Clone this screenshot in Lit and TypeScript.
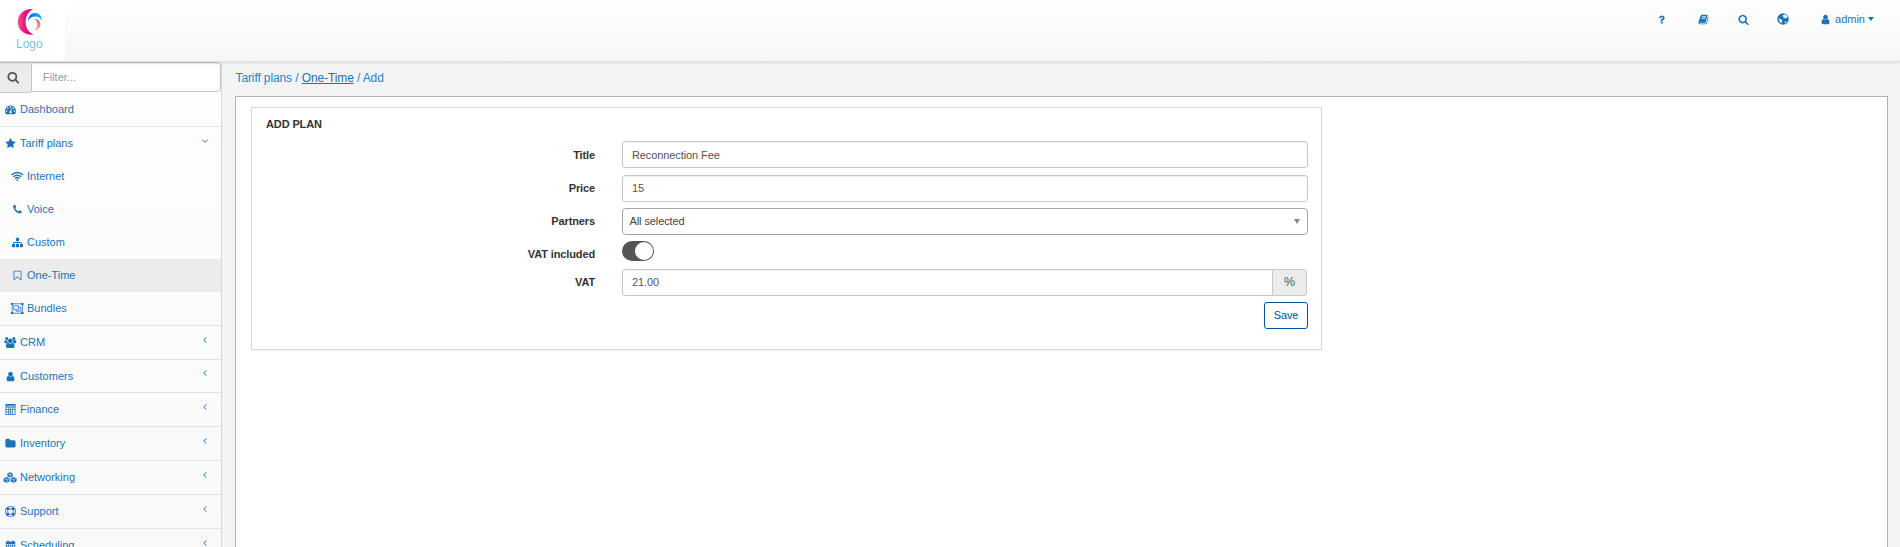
import { LitElement, html, css, svg, type TemplateResult } from "lit";
import { customElement, property } from "lit/decorators.js";
import { classMap } from "lit/directives/class-map.js";

interface Glyph { w: number; body: TemplateResult }
const p = (d: string, w = 1792): Glyph => ({ w, body: svg`<path d=${d}/>` });

const glyphs: Record<string, Glyph> = {
  search: p("M1216 832q0-185-131.5-316.5t-316.5-131.5-316.5 131.5-131.5 316.5 131.5 316.5 316.5 131.5 316.5-131.5 131.5-316.5zm512 832q0 52-38 90t-90 38q-54 0-90-38l-343-342q-179 124-399 124-143 0-273.5-55.5t-225-150-150-225-55.5-273.5 55.5-273.5 150-225 225-150 273.5-55.5 273.5 55.5 225 150 150 225 55.5 273.5q0 220-124 399l343 343q37 37 37 90z"),
  dashboard: p("M384 1152q0-53-37.5-90.5t-90.5-37.5-90.5 37.5-37.5 90.5 37.5 90.5 90.5 37.5 90.5-37.5 37.5-90.5zm192-448q0-53-37.5-90.5t-90.5-37.5-90.5 37.5-37.5 90.5 37.5 90.5 90.5 37.5 90.5-37.5 37.5-90.5zm428 481l101-382q6-26-7.5-48.5t-38.5-29.5-48 6.5-30 39.5l-101 382q-60 5-107 43.5t-63 98.5q-20 77 20 146t117 89 146-20 89-117q16-60-6-117t-72-91zm660-33q0-53-37.5-90.5t-90.5-37.5-90.5 37.5-37.5 90.5 37.5 90.5 90.5 37.5 90.5-37.5 37.5-90.5zm-640-640q0-53-37.5-90.5t-90.5-37.5-90.5 37.5-37.5 90.5 37.5 90.5 90.5 37.5 90.5-37.5 37.5-90.5zm448 192q0-53-37.5-90.5t-90.5-37.5-90.5 37.5-37.5 90.5 37.5 90.5 90.5 37.5 90.5-37.5 37.5-90.5zm320 448q0 261-141 483-19 29-54 29h-1402q-35 0-54-29-141-221-141-483 0-182 71-348t191-286 286-191 348-71 348 71 286 191 191 286 71 348z"),
  star: p("M1728 647q0 22-26 48l-363 354 86 500q1 7 1 20 0 21-10.5 35.5t-30.5 14.5q-19 0-40-12l-449-236-449 236q-22 12-40 12-21 0-31.5-14.5t-10.5-35.5q0-6 2-20l86-500-364-354q-25-27-25-48 0-37 56-46l502-73 225-455q19-41 49-41t49 41l225 455 502 73q56 9 56 46z"),
  phone: p("M1600 1240q0 27-10 70.5t-21 68.5q-21 50-122 106-94 51-186 51-27 0-53-3.5t-57.5-12.5-47-14.5-55.5-20.5-49-18q-98-35-175-83-127-79-264-216t-216-264q-48-77-83-175-3-9-18-49t-20.5-55.5-14.5-47-12.5-57.5-3.5-53q0-92 51-186 56-101 106-122 25-11 68.5-21t70.5-10q14 0 21 3 18 6 53 76 11 19 30 54t35 63.5 31 53.5q3 4 17.5 25t21.5 35.5 7 28.5q0 20-28.5 50t-62 55-62 53-28.5 46q0 9 5 22.5t8.5 20.5 14 24 11.5 19q76 137 174 235t235 174q2 1 19 11.5t24 14 20.5 8.5 22.5 5q18 0 46-28.5t53-62 55-62 50-28.5q14 0 28.5 7t35.5 21.5 25 17.5q25 15 53.5 31t63.5 35 54 30q70 35 76 53 3 7 3 21z"),
  sitemap: p("M1792 1248v320q0 40-28 68t-68 28h-320q-40 0-68-28t-28-68v-320q0-40 28-68t68-28h96v-192h-512v192h96q40 0 68 28t28 68v320q0 40-28 68t-68 28h-320q-40 0-68-28t-28-68v-320q0-40 28-68t68-28h96v-192h-512v192h96q40 0 68 28t28 68v320q0 40-28 68t-68 28h-320q-40 0-68-28t-28-68v-320q0-40 28-68t68-28h96v-192q0-52 38-90t90-38h512v-192h-96q-40 0-68-28t-28-68v-320q0-40 28-68t68-28h320q40 0 68 28t28 68v320q0 40-28 68t-68 28h-96v192h512q52 0 90 38t38 90v192h96q40 0 68 28t28 68z"),
  bookmark: p("M1408 256h-1024v1242l423-406 89-85 89 85 423 406v-1242zm12-128q23 0 44 9 33 13 52.5 41t19.5 62v1289q0 34-19.5 62t-52.5 41q-19 8-44 8-48 0-83-32l-441-424-441 424q-36 33-83 33-23 0-44-9-33-13-52.5-41t-19.5-62v-1289q0-34 19.5-62t52.5-41q21-9 44-9h1048z"),
  user: p("M1536 1399q0 109-62.5 187t-150.5 78h-854q-88 0-150.5-78t-62.5-187q0-85 8.5-160.5t31.5-152 58.5-131 94-89 134.5-34.5q131 128 313 128t313-128q76 0 134.5 34.5t94 89 58.5 131 31.5 152 8.5 160.5zm-256-887q0 159-112.5 271.5t-271.5 112.5-271.5-112.5-112.5-271.5 112.5-271.5 271.5-112.5 271.5 112.5 112.5 271.5z"),
  folder: p("M1728 608v704q0 92-66 158t-158 66h-1216q-92 0-158-66t-66-158v-960q0-92 66-158t158-66h320q92 0 158 66t66 158v32h672q92 0 158 66t66 158z"),
  group: p("M657 896q-162 5-265 128h-134q-82 0-138-40.5t-56-118.5q0-353 124-353 6 0 43.5 21t97.5 42.5 119 21.5q67 0 133-23-5 37-5 66 0 159 93 287zm1071 637q0 120-73 189.5t-194 69.5h-874q-121 0-194-69.5t-73-189.5q0-53 3.5-103.5t14-109 26.5-108.5 43-97.5 62-81 85.5-53.5 111.5-20q10 0 43 21.5t73 48 107 48 135 21.5 135-21.5 107-48 73-48 43-21.5q61 0 111.5 20t85.5 53.5 62 81 43 97.5 26.5 108.5 14 109 3.5 103.5zm-1024-1277q0 106-75 181t-181 75-181-75-75-181 75-181 181-75 181 75 75 181zm704 384q0 159-112.5 271.5t-271.5 112.5-271.5-112.5-112.5-271.5 112.5-271.5 271.5-112.5 271.5 112.5 112.5 271.5zm576 225q0 78-56 118.5t-138 40.5h-134q-103-123-265-128 93-128 93-287 0-29-5-66 66 23 133 23 59 0 119-21.5t97.5-42.5 43.5-21q124 0 124 353zm-128-609q0 106-75 181t-181 75-181-75-75-181 75-181 181-75 181 75 75 181z", 2048),
  book: p("M1703 478q40 57 18 129l-275 906q-19 64-76.5 107.5t-122.5 43.5h-923q-77 0-148.5-53.5t-99.5-131.5q-24-67-2-127 0-4 3-27t4-37q1-8-3-21.5t-3-19.5q2-11 8-21t16.5-23.5 16.5-23.5q23-38 45-91.5t30-91.5q3-10 .5-30t-.5-28q3-11 17-28t17-23q21-36 42-92t25-90q1-9-2.5-32t.5-28q4-13 22-30.5t22-22.5q19-26 42.5-84.5t27.5-96.5q1-8-3-25.5t-2-26.5q2-8 9-18t18-23 17-21q8-12 16.5-30.5t15-35 16-36 19.5-32 26.5-23.5 36-11.5 47.5 5.5l-1 3q38-9 51-9h761q74 0 114 56t18 130l-274 906q-36 119-71.5 153.5t-128.5 34.5h-869q-27 0-38 15-11 16-1 43 24 70 144 70h923q29 0 56-15.5t35-41.5l300-987q7-22 5-57 38 15 59 43zm-1064 2q-4 13 2 22.5t20 9.5h608q13 0 25.5-9.5t16.5-22.5l21-64q4-13-2-22.5t-20-9.5h-608q-13 0-25.5 9.5t-16.5 22.5zm-83 256q-4 13 2 22.5t20 9.5h608q13 0 25.5-9.5t16.5-22.5l21-64q4-13-2-22.5t-20-9.5h-608q-13 0-25.5 9.5t-16.5 22.5z"),
  question: p("M1088 1256v240q0 16-12 28t-28 12h-240q-16 0-28-12t-12-28v-240q0-16 12-28t28-12h240q16 0 28 12t12 28zm316-600q0 54-15.5 101t-35 76.5-55 59.5-57.5 43.5-61 35.5q-41 23-68.5 65t-27.5 67q0 17-12 32.5t-28 15.5h-240q-15 0-25.5-18.5t-10.5-37.5v-45q0-83 65-156.5t143-108.5q59-27 84-56t25-76q0-42-46.5-74t-107.5-32q-65 0-108 29-35 25-107 115-13 16-31 16-12 0-25-8l-164-125q-13-10-15.5-25t5.5-28q160-266 464-266 80 0 161 31t146 83 106 127.5 41 158.5z"),
  support: p("M896 0q182 0 348 71t286 191 191 286 71 348-71 348-191 286-286 191-348 71-348-71-286-191-191-286-71-348 71-348 191-286 286-191 348-71zm0 128q-190 0-361 90l194 194q82-28 167-28t167 28l194-194q-171-90-361-90zm-678 1129l194-194q-28-82-28-167t28-167l-194-194q-90 171-90 361t90 361zm678 407q190 0 361-90l-194-194q-82 28-167 28t-167-28l-194 194q171 90 361 90zm0-384q159 0 271.5-112.5t112.5-271.5-112.5-271.5-271.5-112.5-271.5 112.5-112.5 271.5 112.5 271.5 271.5 112.5zm484-217l194 194q90-171 90-361t-90-361l-194 194q28 82 28 167t-28 167z"),
  wifi: { w: 2048, body: svg`<g fill="none" stroke="currentColor" stroke-width="230"><path d="M90 660Q480 250 1024 250T1958 660"/><path d="M380 960Q650 670 1024 670T1668 960"/><path d="M670 1240Q820 1070 1024 1070T1378 1240"/></g><path d="M1024 1660l-200-220q80-90 200-90t200 90z"/>` },
  bundles: { w: 2048, body: svg`<g fill="none" stroke="currentColor" stroke-width="128"><path d="M190 128H1858V1664H190Z"/><path d="M448 448H1216V1088H448Z"/><path d="M1280 704H1600V1344H832V1152"/></g><path d="M0 0h384v320H0zM1664 0h384v320h-384zM0 1472h384v320H0zM1664 1472h384v320h-384z"/>` },
  finance: p("M80 0H1712V1792H80ZM220 570V840H490V570ZM600 570V840H850V570ZM960 570V840H1210V570ZM1320 570V840H1580V570ZM220 960V1230H490V960ZM600 960V1230H850V960ZM960 960V1230H1210V960ZM1320 960V1650H1580V960ZM220 1350V1650H490V1350ZM600 1350V1650H850V1350ZM960 1350V1650H1210V1350ZM220 270V390H1580V270Z"),
  cubes: { w: 2304, body: svg`<path d="M1152 30L1590 210V700L1152 900L714 700V210ZM600 800L1060 990V1530L600 1760L90 1530V1010ZM1704 800L2214 1010V1530L1704 1760L1244 1530V990Z"/><g class="cut" fill="none" stroke-width="95"><path d="M790 290L1152 440L1514 290M1200 450V800M200 1060L600 1240L990 1060M650 1250V1640M1310 1060L1704 1240L2110 1060M1754 1250V1640"/></g>` },
  calendar: p("M128 1728V256H400V64H600V256H1192V64H1392V256H1664V1728ZM256 640V880H500V640ZM620 640V880H850V640ZM950 640V880H1180V640ZM1300 640V880H1536V640ZM256 1000V1240H500V1000ZM620 1000V1240H850V1000ZM950 1000V1240H1180V1000ZM1300 1000V1240H1536V1000ZM256 1360V1600H500V1360ZM620 1360V1600H850V1360ZM950 1360V1600H1180V1360ZM1300 1360V1600H1536V1360Z"),
  globe: { w: 1792, body: svg`<circle cx="896" cy="896" r="860"/><path class="hole" d="M880 330L1080 230L1330 260L1530 480L1600 700L1480 700L1330 700L1200 830L1130 760L1020 800L960 700L1060 620L960 560L860 520ZM200 800L420 900L640 960L800 1120L700 1290L640 1520L440 1400L360 1140ZM1180 1300L1450 1200L1330 1430L1130 1560Z"/>` },
};

@customElement("ui-icon")
class UiIcon extends LitElement {
  static styles = css`
    :host { display: inline-flex; flex: none; justify-content: center; width: 14px; height: var(--icon-size, 11px); }
    svg { height: 100%; width: auto; display: block; fill: currentColor; overflow: visible; flex: none; }
    .cut { stroke: #fafafa; }
    .hole { fill: #fdfdfd; }
  `;
  @property() name = "";
  render() {
    const g = glyphs[this.name];
    return html`<svg viewBox="0 0 ${g.w} 1792" fill-rule="evenodd">${g.body}</svg>`;
  }
}

interface Item { icon: string; label: string; kind?: "sub" | "open" | "leaf"; active?: boolean; last?: boolean; tight?: boolean }
const items: Item[] = [
  { icon: "dashboard", label: "Dashboard", kind: "leaf" },
  { icon: "star", label: "Tariff plans", kind: "open" },
  { icon: "wifi", label: "Internet", kind: "sub" },
  { icon: "phone", label: "Voice", kind: "sub" },
  { icon: "sitemap", label: "Custom", kind: "sub" },
  { icon: "bookmark", label: "One-Time", kind: "sub", active: true },
  { icon: "bundles", label: "Bundles", kind: "sub", last: true },
  { icon: "group", label: "CRM" },
  { icon: "user", label: "Customers", tight: true },
  { icon: "finance", label: "Finance" },
  { icon: "folder", label: "Inventory" },
  { icon: "cubes", label: "Networking" },
  { icon: "support", label: "Support" },
  { icon: "calendar", label: "Scheduling" },
];

@customElement("side-nav")
class SideNav extends LitElement {
  static styles = css`
    :host { display: block; box-sizing: border-box; width: 222px; flex: none; overflow: hidden; border-right: 1px solid #d9d9d9; background: linear-gradient(#fefefe, #f9f9f9); color: #1c72bb; }
    .filter { display: flex; height: 31px; }
    .addon { box-sizing: border-box; width: 31px; display: flex; align-items: center; justify-content: center; background: #ececec; border: solid #c8c8c8; border-width: 1px 0; color: #555; --icon-size: 12.5px; padding-right: 4px; }
    .box { box-sizing: border-box; flex: 1; height: 30px; border: 1px solid #c4c4c4; border-radius: 0 4px 4px 0; background: #fff; padding-left: 11px; line-height: 28px; color: #999; box-shadow: inset 0 1px 1px rgba(0,0,0,.075); }
    .item { box-sizing: border-box; display: flex; align-items: center; height: 34px; border-bottom: 1px solid #e2e2e2; padding: 0 13px 0 3px; gap: 3px; }
    .tight { height: 33px; }
    .open, .sub { height: 33px; border-bottom: 0; }
    .sub { padding-left: 10px; }
    .last { height: 34px; border-bottom: 1px solid #e2e2e2; }
    .active { background: #ececec; }
    .label { flex: 1; line-height: 13px; }
    .chev { width: 6px; height: 6px; margin-bottom: 6px; fill: none; stroke: currentColor; stroke-width: 1; }
  `;
  render() {
    return html`
      <div class="filter"><span class="addon"><ui-icon name="search"></ui-icon></span><span class="box">Filter...</span></div>
      ${items.map((i) => html`
        <div class=${classMap({ item: true, sub: i.kind === "sub", open: i.kind === "open", active: !!i.active, last: !!i.last, tight: !!i.tight })}>
          <ui-icon name=${i.icon}></ui-icon><span class="label">${i.label}</span>
          ${i.kind === "open" ? html`<svg class="chev" viewBox="0 0 6 6"><path d="M.3 1.7L3 4.4L5.7 1.7"/></svg>` : ""}
          ${!i.kind ? html`<svg class="chev" viewBox="0 0 6 6"><path d="M4.4 .3L1.7 3L4.4 5.7"/></svg>` : ""}
        </div>`)}
    `;
  }
}

@customElement("top-bar")
class TopBar extends LitElement {
  static styles = css`
    :host { box-sizing: border-box; display: flex; justify-content: space-between; height: 62px; flex: none; background: linear-gradient(#fff, #f6f6f6); border-bottom: 1px solid #dfdfdf; box-shadow: 0 1px 3px rgba(0,0,0,.1); position: relative; color: #1c72bb; }
    .logo { width: 65px; background: #fff; display: flex; flex-direction: column; padding: 8px 0 0 16px; box-sizing: border-box; }
    .mark { width: 28px; height: 28px; display: block; }
    .word { font-size: 12px; line-height: 14px; color: #82c0f2; padding-top: 1px; }
    .tools { display: flex; align-items: center; height: 38px; padding-right: 26px; }
    .tool { margin-right: 26px; }
    .wide { margin-right: 28px; }
    .globe { --icon-size: 12px; margin-right: 28px; margin-bottom: 1px; }
    .caret { border: solid transparent; border-width: 4px 3.5px 0; border-top-color: currentColor; margin-left: 3px; }
    .name { margin-left: 3px; }
  `;
  render() {
    return html`
      <div class="logo">
        <svg class="mark" viewBox="16 8 28 28">
          <defs>
            <linearGradient id="a" x1="0" x2="1"><stop offset="0" stop-color="#f0567c"/><stop offset=".5" stop-color="#ee0a8c"/><stop offset="1" stop-color="#c4007c"/></linearGradient>
            <linearGradient id="b" x1="0" x2="1"><stop offset="0" stop-color="#1c50e8"/><stop offset="1" stop-color="#12c4e8"/></linearGradient>
            <linearGradient id="c" x1="0" x2="0" y1="0" y2="1"><stop offset="0" stop-color="#e05a5c"/><stop offset="1" stop-color="#fbb092"/></linearGradient>
          </defs>
          <path fill="url(#a)" d="M33 9C23.5 8.6 17.8 14.5 17.8 22S23.8 35.3 33.4 34.7C28.5 32 25.6 28 25.6 22S28.5 11.5 33 9Z"/>
          <path fill="url(#b)" d="M28 20.8C28.3 16 31.2 13 35.3 13C39.2 13 42 16.2 42 20.8C40.5 18 38.2 16.5 35 16.5C32 16.5 29.8 17.8 28 20.8Z"/>
          <path fill="url(#c)" d="M34.5 19C38 19 40.4 21.4 40.4 24.4C40.4 27.6 38 29.9 34.3 30C36.4 28.4 37.5 26.6 37.3 24.1C37.2 22 36.5 20.4 34.5 19Z"/>
        </svg>
        <span class="word">Logo</span>
      </div>
      <div class="tools">
        <ui-icon class="wide" name="question"></ui-icon>
        <ui-icon class="tool" name="book"></ui-icon>
        <ui-icon class="tool" name="search"></ui-icon>
        <ui-icon class="globe" name="globe"></ui-icon>
        <ui-icon name="user"></ui-icon><span class="name">admin</span><span class="caret"></span>
      </div>`;
  }
}

@customElement("plan-form")
class PlanForm extends LitElement {
  static styles = css`
    :host { display: block; box-sizing: border-box; width: 1071px; height: 243px; border: 1px solid #d8d8d8; padding: 9px 13px 0 14px; box-shadow: 0 1px 2px rgba(0,0,0,.06); color: #333; letter-spacing: -.1px; }
    .title { font-weight: bold; line-height: 14px; margin-bottom: 10px; letter-spacing: -.12px; }
    .row { display: grid; grid-template-columns: 329px 686px; column-gap: 27px; height: 34px; }
    .r33 { height: 33px; }
    .r28 { height: 28px; }
    .label { font-weight: bold; text-align: right; line-height: 27px; height: 27px; letter-spacing: -.12px; }
    .input, .select { box-sizing: border-box; height: 27px; border: 1px solid #c8c8c8; border-radius: 3px; padding-left: 9px; line-height: 25px; color: #555; box-shadow: inset 0 1px 1px rgba(0,0,0,.06); }
    .first .label { line-height: 29px; }
    .first .input { line-height: 27px; }
    .select { border-color: #a5a5a5; padding: 0 7px 0 6.5px; color: #444; display: flex; justify-content: space-between; align-items: center; box-shadow: none; border-radius: 4px; }
    .arrow { border: solid transparent; border-width: 5px 3px 0; border-top-color: #888; }
    .toggle { box-sizing: border-box; width: 32px; height: 20px; border-radius: 10px; background: #555; padding: 1px; display: flex; justify-content: flex-end; }
    .knob { width: 18px; height: 18px; border-radius: 50%; background: #fff; }
    .group { display: flex; padding-right: 1px; }
    .group .input { flex: 1; border-radius: 3px 0 0 3px; }
    .unit { box-sizing: border-box; width: 34px; height: 27px; border: 1px solid #c8c8c8; border-left: 0; border-radius: 0 3px 3px 0; background: #ececec; text-align: center; font-size: 12.5px; line-height: 25px; color: #555; }
    .foot { display: flex; justify-content: flex-end; }
    .save { box-sizing: border-box; width: 44px; height: 27px; border: 1px solid #00539b; border-radius: 3px; background: #fff; color: #00539b; text-align: center; line-height: 25px; }
  `;
  render() {
    return html`
      <div class="title">ADD PLAN</div>
      <div class="row first"><span class="label">Title</span><span class="input">Reconnection Fee</span></div>
      <div class="row r33"><span class="label">Price</span><span class="input">15</span></div>
      <div class="row r33"><span class="label">Partners</span><span class="select">All selected<i class="arrow"></i></span></div>
      <div class="row r28"><span class="label">VAT included</span><span class="toggle"><i class="knob"></i></span></div>
      <div class="row r33"><span class="label">VAT</span><span class="group"><span class="input">21.00</span><span class="unit">%</span></span></div>
      <div class="foot"><span class="save">Save</span></div>`;
  }
}

@customElement("app-root")
class AppRoot extends LitElement {
  static styles = css`
    :host { display: flex; flex-direction: column; height: 547px; overflow: hidden; font: 11px/14px "Liberation Sans", Arial, sans-serif; background: #f4f4f4; }
    .body { flex: 1; display: flex; min-height: 0; }
    .main { flex: 1; min-width: 0; display: flex; flex-direction: column; padding: 9px 12px 0 13px; }
    .crumbs { font-size: 12px; line-height: 14px; color: #2582cc; margin-bottom: 11px; padding-left: .5px; letter-spacing: -.11px; }
    .link { text-decoration: underline; color: #1c72bb; }
    .panel { flex: 1; border: 1px solid #b2b2b2; border-bottom: 0; background: #fff; padding: 10px 15px; }
  `;
  render() {
    return html`
      <top-bar></top-bar>
      <div class="body">
        <side-nav></side-nav>
        <div class="main">
          <div class="crumbs">Tariff plans / <span class="link">One-Time</span> / Add</div>
          <div class="panel"><plan-form></plan-form></div>
        </div>
      </div>`;
  }
}
